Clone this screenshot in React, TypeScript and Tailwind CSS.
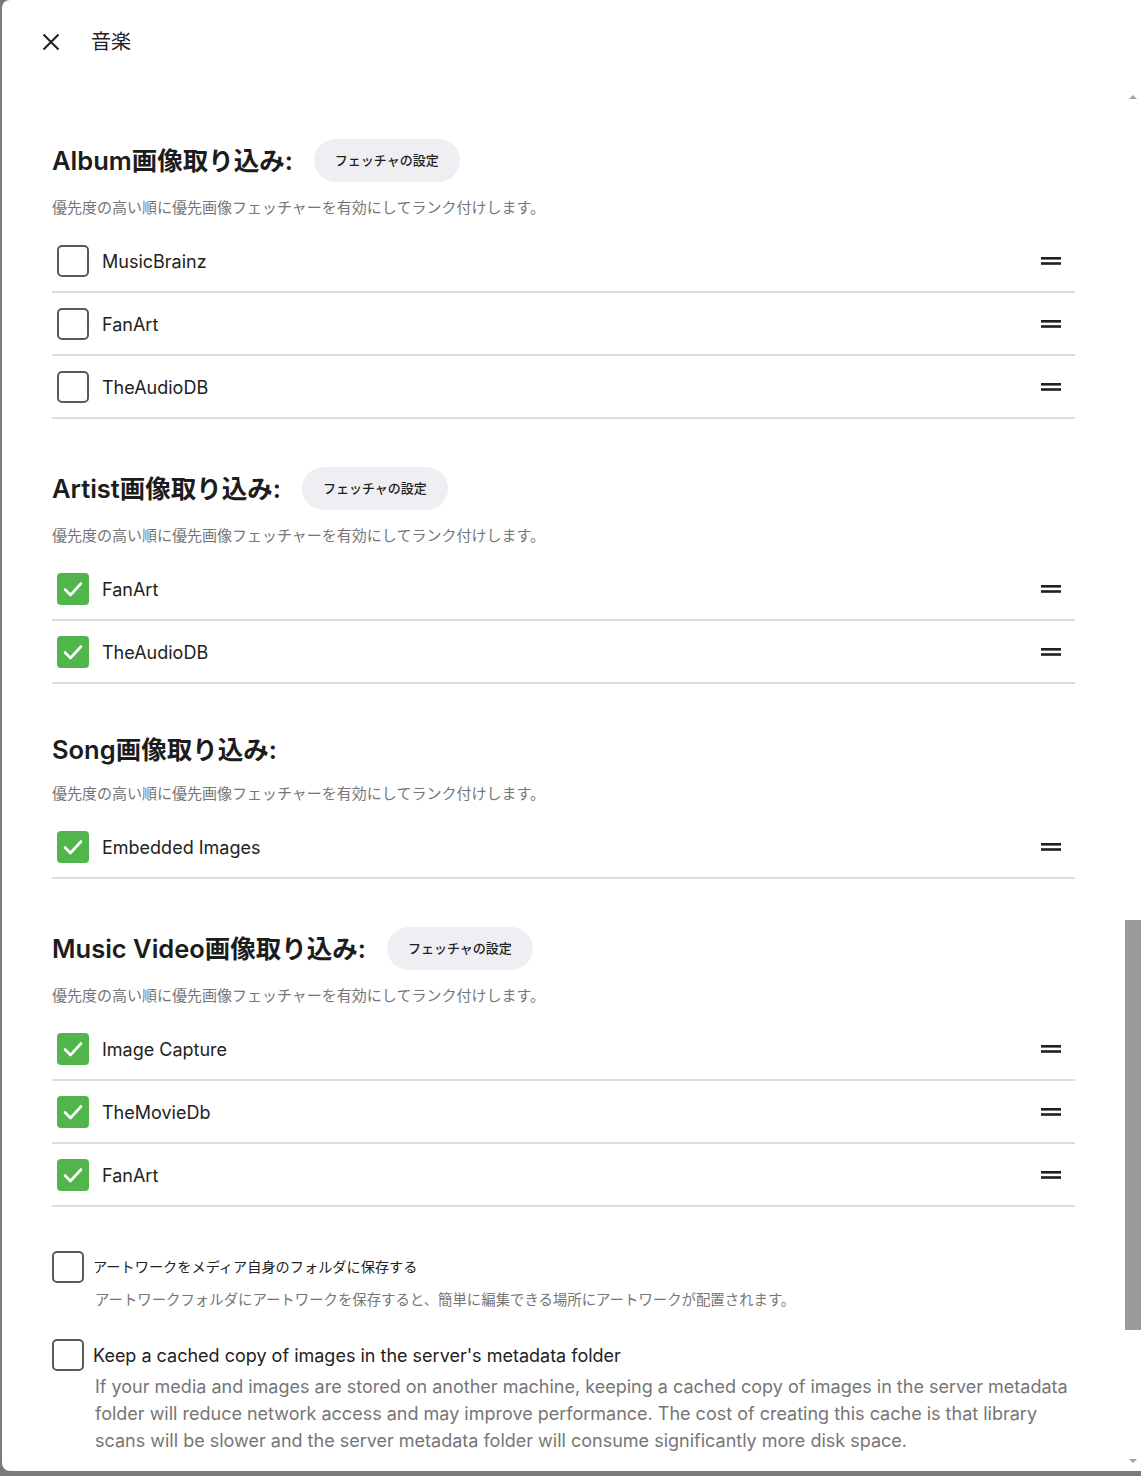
import React from "react";

type Fetcher = { name: string; on: boolean };
type Section = { title: string; button: boolean; items: Fetcher[] };

const DESC = "優先度の高い順に優先画像フェッチャーを有効にしてランク付けします。";

const SECTIONS: Section[] = [
  {
    title: "Album画像取り込み:",
    button: true,
    items: [
      { name: "MusicBrainz", on: false },
      { name: "FanArt", on: false },
      { name: "TheAudioDB", on: false },
    ],
  },
  {
    title: "Artist画像取り込み:",
    button: true,
    items: [
      { name: "FanArt", on: true },
      { name: "TheAudioDB", on: true },
    ],
  },
  {
    title: "Song画像取り込み:",
    button: false,
    items: [{ name: "Embedded Images", on: true }],
  },
  {
    title: "Music Video画像取り込み:",
    button: true,
    items: [
      { name: "Image Capture", on: true },
      { name: "TheMovieDb", on: true },
      { name: "FanArt", on: true },
    ],
  },
];

function Box({ on }: { on: boolean }) {
  if (on) {
    return (
      <span className="flex h-[32px] w-[32px] shrink-0 items-center justify-center rounded-[4px] bg-[#52b54b]">
        <svg width="32" height="32" viewBox="0 0 32 32" fill="none">
          <polyline points="8,16.5 13.5,22 24,10.5" stroke="#fff" strokeWidth="2.6" strokeLinecap="round" strokeLinejoin="round" />
        </svg>
      </span>
    );
  }
  return <span className="block h-[32px] w-[32px] shrink-0 rounded-[5px] border-2 border-[#5a5a5a] bg-white" />;
}

function DragHandle() {
  return (
    <svg width="20" height="9" viewBox="0 0 20 9" className="mr-[14px]">
      <rect x="0" y="0" width="20" height="2.6" fill="#202020" />
      <rect x="0" y="5.2" width="20" height="2.6" fill="#202020" />
    </svg>
  );
}

export default function App() {
  return (
    <div className="h-[1476px] w-[1141px] overflow-hidden bg-[#7a7a7a] font-['Inter','Noto_Sans_CJK_JP',sans-serif]">
      <div className="ml-[2px] flex h-[1471px] flex-col overflow-hidden rounded-l-[8px] bg-white">
        {/* header */}
        <div className="flex h-[84px] shrink-0 items-center pl-[40px]">
          <svg width="18" height="18" viewBox="0 0 18 18" className="mr-[31px]">
            <path d="M1.5 1.5 L16.5 16.5 M16.5 1.5 L1.5 16.5" stroke="#222" strokeWidth="2.1" />
          </svg>
          <span className="text-[20px] text-[#1f1f1f]">音楽</span>
        </div>

        <div className="flex min-h-0 flex-1">
          <div className="min-w-0 flex-1 overflow-hidden px-[50px] pt-[55px]">
            {SECTIONS.map((s, si) => (
              <section key={s.title} className={si === 0 ? "" : "mt-[48px]"}>
                <div className="flex min-h-[36px] items-center gap-[21px]">
                  <h2 className="text-[25.5px] font-semibold leading-[36px] text-[#1c1c1c]">{s.title}</h2>
                  {s.button && (
                    <button className="h-[43px] rounded-full bg-[#efeef3] px-[21px] text-[13px] font-medium text-[#1f1f1f]">
                      フェッチャの設定
                    </button>
                  )}
                </div>
                <p className="mt-[14px] text-[15px] leading-[24px] text-[#767676]">{DESC}</p>
                <div className="mt-[10px]">
                  {s.items.map((it, i) => (
                    <div key={`${it.name}-${i}`} className="flex h-[63px] items-center border-b-2 border-[#dcdcdc] pl-[5px] pt-[1px]">
                      <Box on={it.on} />
                      <span className="ml-[13px] flex-1 text-[18px] text-[#222]">{it.name}</span>
                      <DragHandle />
                    </div>
                  ))}
                </div>
              </section>
            ))}

            <div className="mt-[44px]">
              <label className="flex items-center gap-[9px]">
                <Box on={false} />
                <span className="text-[14.2px] text-[#222]">アートワークをメディア自身のフォルダに保存する</span>
              </label>
              <p className="mt-[5px] pl-[43px] text-[14.4px] leading-[24px] text-[#767676]">
                アートワークフォルダにアートワークを保存すると、簡単に編集できる場所にアートワークが配置されます。
              </p>
            </div>

            <div className="mt-[27px]">
              <label className="flex items-center gap-[9px]">
                <Box on={false} />
                <span className="text-[18px] text-[#222]">Keep a cached copy of images in the server's metadata folder</span>
              </label>
              <p className="mt-[2px] pl-[43px] text-[18px] leading-[27px] text-[#767676]">
                If your media and images are stored on another machine, keeping a cached copy of images in the server metadata folder will reduce network access and may improve performance. The cost of creating this cache is that library scans will be slower and the server metadata folder will consume significantly more disk space.
              </p>
            </div>
          </div>

          {/* scrollbar */}
          <div className="relative w-[16px] shrink-0 bg-white">
            <div className="flex h-[16px] items-center justify-center pt-[10px]">
              <span className="h-0 w-0 border-x-[4px] border-b-[4px] border-x-transparent border-b-[#a3a3a3]" />
            </div>
            <div className="absolute left-0 right-0 top-[836px] h-[410px] bg-[#9b9b9b]" />
            <div className="absolute bottom-[8px] left-0 right-0 flex justify-center">
              <span className="h-0 w-0 border-x-[4px] border-t-[4px] border-x-transparent border-t-[#a3a3a3]" />
            </div>
          </div>
        </div>
      </div>
    </div>
  );
}
